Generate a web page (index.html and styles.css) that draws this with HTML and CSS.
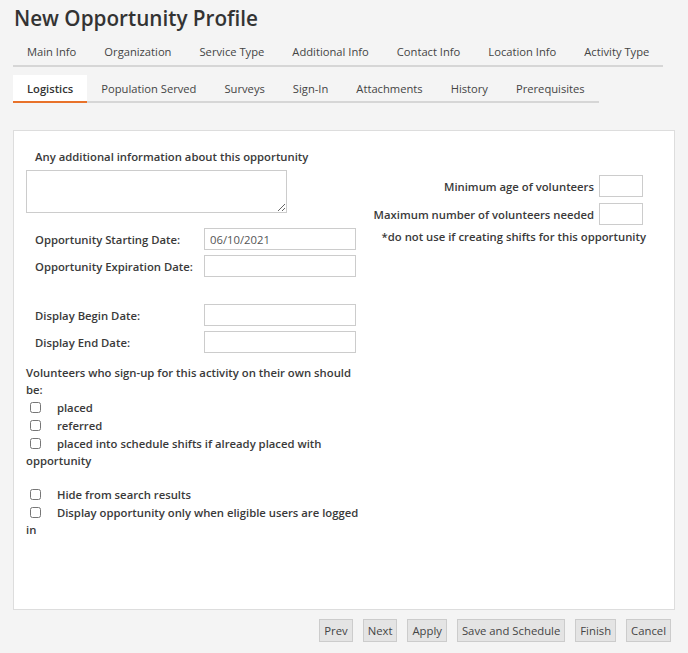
FILE: index.html
```html
<!DOCTYPE html>
<html>

<head>
    <meta charset="utf-8">
    <title>New Opportunity Profile</title>
    <link rel="stylesheet" href="styles.css">
</head>

<body>
    <h1 class="title">New Opportunity Profile</h1>

    <ul class="tabs">
        <li>Main Info</li>
        <li>Organization</li>
        <li>Service Type</li>
        <li>Additional Info</li>
        <li>Contact Info</li>
        <li>Location Info</li>
        <li>Activity Type</li>
    </ul>
    <ul class="tabs tabs2">
        <li class="active">Logistics</li>
        <li>Population Served</li>
        <li>Surveys</li>
        <li>Sign-In</li>
        <li>Attachments</li>
        <li>History</li>
        <li>Prerequisites</li>
    </ul>

    <form class="panel">
        <div class="leftcol">
            <label class="lbl info-lbl">Any additional information about this opportunity</label>
            <textarea class="info"></textarea>

            <table class="dates">
                <tr>
                    <td class="lbl">Opportunity Starting Date:</td>
                    <td><input type="text" class="txt" value="06/10/2021"></td>
                </tr>
                <tr>
                    <td class="lbl">Opportunity Expiration Date:</td>
                    <td><input type="text" class="txt"></td>
                </tr>
                <tr class="spacer"><td colspan="2"></td></tr>
                <tr>
                    <td class="lbl">Display Begin Date:</td>
                    <td><input type="text" class="txt"></td>
                </tr>
                <tr>
                    <td class="lbl">Display End Date:</td>
                    <td><input type="text" class="txt"></td>
                </tr>
            </table>

            <div class="lbl signup">Volunteers who sign-up for this activity on their own should be:</div>
            <div class="lbl chk"><input type="checkbox"> placed</div>
            <div class="lbl chk"><input type="checkbox"> referred</div>
            <div class="lbl chk"><input type="checkbox"> placed into schedule shifts if already placed with opportunity</div>

            <div class="lbl chk gap"><input type="checkbox"> Hide from search results</div>
            <div class="lbl chk"><input type="checkbox"> Display opportunity only when eligible users are logged in</div>
        </div>

        <div class="rightcol">
            <div class="row">
                <span class="lbl">Minimum age of volunteers</span>
                <input type="text" class="small">
            </div>
            <div class="row">
                <span class="lbl">Maximum number of volunteers needed</span>
                <input type="text" class="small">
            </div>
            <div class="lbl note">*do not use if creating shifts for this opportunity</div>
        </div>
    </form>

    <div class="buttons">
        <input type="button" class="btn" value="Prev">
        <input type="button" class="btn" value="Next">
        <input type="button" class="btn" value="Apply">
        <input type="button" class="btn" value="Save and Schedule">
        <input type="button" class="btn" value="Finish">
        <input type="button" class="btn" value="Cancel">
    </div>
</body>

</html>
```

FILE: styles.css
```css
body {
    margin: 0;
    background-color: #f4f4f4;
    font-family: "Open Sans", "Noto Sans", sans-serif;
    color: #444;
}

.title {
    margin: 0;
    padding: 4px 14px 0;
    font-size: 20.7px;
    font-weight: 600;
    color: #333;
    line-height: 28px;
}

.tabs {
    display: flex;
    width: fit-content;
    margin: 5px 0 0 13px;
    padding: 0;
    list-style: none;
    border-bottom: 2px solid #d6d6d6;
    font-size: 11.2px;
    white-space: nowrap;
}

.tabs li {
    flex: none;
    padding: 6px 14px 5px;
    line-height: 17px;
}

.tabs2 {
    margin-top: 8px;
}

.tabs2 li {
    padding-top: 5px;
    padding-bottom: 4px;
}

.tabs .active {
    background-color: white;
    font-weight: 600;
    color: #333;
    box-shadow: 0 2px 0 #e8722a;
}

.panel {
    display: flex;
    margin: 27px 13px 0;
    height: 480px;
    box-sizing: border-box;
    background-color: white;
    border: 1px solid #ddd;
}

.lbl {
    font-size: 11.3px;
    font-weight: 600;
    color: #3a3a3a;
    line-height: 17px;
    white-space: nowrap;
}

.leftcol {
    width: 335px;
    padding: 17px 0 0 12px;
}

.leftcol .signup, .leftcol .chk {
    white-space: normal;
}

.info-lbl {
    display: block;
    padding-left: 9px;
}

.info {
    display: block;
    width: 261px;
    height: 43px;
    margin-top: 5px;
    box-sizing: border-box;
    border: 1px solid #ccc;
    resize: vertical;
}

.dates {
    border-collapse: collapse;
    margin: 15px 0 0 9px;
}

.dates td {
    padding: 0 0 5px;
}

.dates td.lbl {
    width: 169px;
}

.spacer td {
    height: 22px;
    padding: 0;
}

.txt, .small {
    box-sizing: border-box;
    height: 22px;
    border: 1px solid #ccc;
    font-family: "Open Sans", sans-serif;
    font-size: 11.3px;
    color: #555;
    padding: 0 5px;
}

.txt {
    display: block;
    width: 152px;
}

.small {
    width: 44px;
    margin-left: 5px;
}

.signup {
    margin-top: 6px;
}

.chk input {
    width: 11px;
    height: 11px;
    margin: 0 13px 0 4px;
    vertical-align: -1px;
}

.chk {
    margin-top: 1px;
}

.gap {
    margin-top: 17px;
}

.rightcol {
    display: flex;
    flex-direction: column;
    align-items: flex-end;
    width: 282px;
    padding-top: 44px;
}

.row {
    display: flex;
    align-items: center;
    margin-bottom: 6px;
}

.note {
    margin-top: -3px;
    margin-right: -3px;
}

.buttons {
    display: flex;
    justify-content: flex-end;
    gap: 10px;
    margin: 9px 17px 0 0;
}

.btn {
    height: 23px;
    padding: 0 4px;
    border: 1px solid #ccc;
    background-color: #e4e4e4;
    font-family: "Open Sans", sans-serif;
    font-size: 11.3px;
    color: #444;
    border-radius: 0;
}
```
